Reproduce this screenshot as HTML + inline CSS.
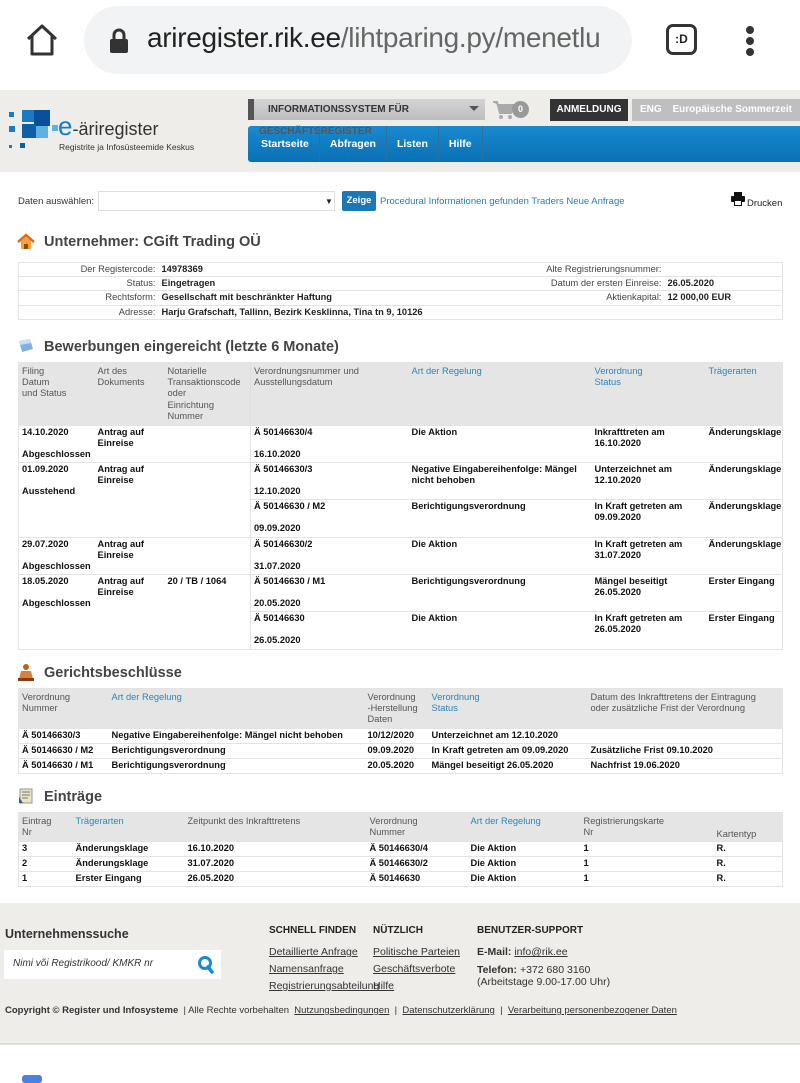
<!DOCTYPE html>
<html><head><meta charset="utf-8">
<style>
*{box-sizing:border-box;margin:0;padding:0}
body{width:800px;height:1080px;overflow:hidden;background:#fff;font-family:"Liberation Sans",Arial,sans-serif;color:#222;position:relative;font-size:10px}
.a{position:absolute}
.top{left:0;top:0;width:800px;height:90px;background:#fff}
.url{left:84px;top:6px;width:548px;height:68px;border-radius:34px;background:#f1f3f4}
.hdr{left:0;top:90px;width:800px;height:82px;background:#eeede9}
.panel{left:2px;top:172px;width:798px;height:731px;background:#fff}
.foot{left:0;top:903px;width:800px;height:142px;background:#eeede9;border-bottom:2px solid #ddd}
table{border-collapse:collapse;position:absolute;table-layout:fixed;font-size:9.3px}
td{vertical-align:top;padding:1px 3px;line-height:11.2px;overflow:hidden}
.h td{background:#e5e5e5;color:#555}
.h td.l{color:#2a86b5}
.b td{font-weight:bold;color:#111}
.grid td{border-top:1px solid #e3e3e3}
.title{font-size:14.5px;font-weight:bold;color:#444;left:44px}
a{color:#222}
.fl a{display:block;color:#333;text-decoration:underline;font-size:10.5px;margin-bottom:5px}
</style></head><body>
<div class="a top"></div>
<svg class="a" style="left:24px;top:22px" width="36" height="36" viewBox="0 0 36 36"><path d="M4 17 L18 4 L32 17 M8 14 V32 H28 V14" fill="none" stroke="#333" stroke-width="3" stroke-linejoin="round"/></svg>
<div class="a url"></div>
<svg class="a" style="left:108px;top:28px" width="22" height="26" viewBox="0 0 22 26"><rect x="2" y="11" width="18" height="14" rx="2" fill="#333"/><path d="M6 11 V7 a5 5 0 0 1 10 0 V11" fill="none" stroke="#333" stroke-width="3"/></svg>
<div class="a" style="left:147px;top:22px;font-size:28px;color:#222;letter-spacing:-0.3px">ariregister.rik.ee<span style="color:#666">/lihtparing.py/menetlu</span></div>
<div class="a" style="left:666px;top:24px;width:31px;height:31px;border:3px solid #333;border-radius:7px;font-size:12px;font-weight:bold;text-align:center;line-height:25px">:D</div>
<div class="a" style="left:746px;top:26px;width:8px;height:8px;border-radius:4px;background:#333"></div>
<div class="a" style="left:746px;top:37px;width:8px;height:8px;border-radius:4px;background:#333"></div>
<div class="a" style="left:746px;top:48px;width:8px;height:8px;border-radius:4px;background:#333"></div>

<div class="a hdr"></div>
<div class="a" style="left:9px;top:112px;width:5px;height:5px;background:#1a7cc0"></div>
<div class="a" style="left:22px;top:110px;width:12px;height:12px;background:#1a7cc0"></div>
<div class="a" style="left:34px;top:110px;width:16px;height:16px;background:#0a4f9a"></div>
<div class="a" style="left:9px;top:126px;width:6px;height:6px;background:#1a7cc0"></div>
<div class="a" style="left:22px;top:124px;width:14px;height:14px;background:#0d5fa8"></div>
<div class="a" style="left:36px;top:126px;width:12px;height:12px;background:#5fb0e3"></div>
<div class="a" style="left:52px;top:125px;width:6px;height:6px;background:#5fb0e3"></div>
<div class="a" style="left:9px;top:145px;width:3px;height:3px;background:#1a7cc0"></div>
<div class="a" style="left:20px;top:143px;width:5px;height:5px;background:#0d5fa8"></div>
<div class="a" style="left:58px;top:113px;font-size:26px;color:#1a7cc0;line-height:26px">e<span style="font-size:18px;color:#333">-äriregister</span></div>
<div class="a" style="left:59px;top:142px;font-size:8.5px;color:#333">Registrite ja Infosüsteemide Keskus</div>
<div class="a" style="left:248px;top:99px;width:237px;height:21px;background:linear-gradient(#d4d4d4,#bdbdbd);border-left:6px solid #555;font-size:10px;font-weight:bold;color:#333;padding:5px 14px">INFORMATIONSSYSTEM FÜR</div>
<div class="a" style="left:469px;top:106px;border:5px solid transparent;border-top:5px solid #555"></div>
<svg class="a" style="left:492px;top:100px" width="22" height="20" viewBox="0 0 22 20"><path d="M1 2 H5 L8 13 H19 L21 5 H6" fill="#aaa" stroke="#aaa" stroke-width="2"/><circle cx="9" cy="17" r="2" fill="#aaa"/><circle cx="18" cy="17" r="2" fill="#aaa"/></svg>
<div class="a" style="left:512px;top:101px;width:17px;height:17px;border-radius:9px;background:#999;color:#fff;font-size:9px;font-weight:bold;text-align:center;line-height:17px">0</div>
<div class="a" style="left:550px;top:99px;width:78px;height:22px;background:#333;color:#fff;font-size:10px;font-weight:bold;text-align:center;line-height:22px">ANMELDUNG</div>
<div class="a" style="left:632px;top:99px;width:168px;height:22px;background:#bfbfbf;color:#fff;font-size:10px;font-weight:bold;line-height:22px;padding-left:8px">ENG <span style="margin-left:8px">Europäische Sommerzeit</span></div>
<div class="a" style="left:248px;top:126px;width:552px;height:36px;background:linear-gradient(#1a8ad0,#0a70b4);border-radius:3px 0 0 3px"></div>
<div class="a" style="left:259px;top:126px;font-size:10px;font-weight:bold;color:#555">GESCHÄFTSREGISTER</div>
<div class="a" style="left:248px;top:126px;height:36px;font-size:10.5px;font-weight:bold;color:#fff;display:flex">
<div style="padding:12px 10px 0 13px;border-right:1px solid #2f6f9a">Startseite</div>
<div style="padding:12px 10px 0 10px;border-right:1px solid #2f6f9a">Abfragen</div>
<div style="padding:12px 10px 0 10px;border-right:1px solid #2f6f9a">Listen</div>
<div style="padding:12px 10px 0 10px;border-right:1px solid #2f6f9a">Hilfe</div>
</div>

<div class="a panel"></div>
<div class="a" style="left:18px;top:196px;font-size:9.5px;color:#333">Daten auswählen:</div>
<div class="a" style="left:98px;top:191px;width:237px;height:20px;border:1px solid #ddd;background:#fff"></div>
<div class="a" style="left:325px;top:197px;font-size:8px">▼</div>
<div class="a" style="left:342px;top:191px;width:34px;height:20px;background:#1a78b8;color:#fff;font-weight:bold;font-size:9.5px;text-align:center;line-height:20px;border-radius:2px">Zeige</div>
<div class="a" style="left:380px;top:196px;font-size:9.5px;color:#2a7db0">Procedural Informationen gefunden Traders Neue Anfrage</div>
<svg class="a" style="left:731px;top:192px" width="14" height="14" viewBox="0 0 14 14"><rect x="3" y="0" width="8" height="4" fill="#111"/><rect x="0" y="4" width="14" height="6" rx="1" fill="#111"/><rect x="3" y="8" width="8" height="6" fill="#111"/><rect x="4" y="9" width="6" height="4" fill="#fff"/></svg>
<div class="a" style="left:747px;top:198px;font-size:9.5px">Drucken</div>

<svg class="a" style="left:17px;top:233px" width="18" height="18" viewBox="0 0 18 18"><path d="M1 9 L9 2 L17 9" fill="none" stroke="#e06a1a" stroke-width="2.5"/><path d="M4 8 V16 H14 V8 L9 4Z" fill="#f3a33a"/><rect x="7" y="11" width="4" height="5" fill="#8a4a1a"/></svg>
<div class="a title" style="top:234px">Unternehmer: CGift Trading OÜ</div>
<table class="grid" style="left:18px;top:262px;width:765px;border:1px solid #e3e3e3">
<col style="width:140px"><col style="width:370px"><col style="width:136px"><col>
<tr><td style="text-align:right;color:#444">Der Registercode:</td><td style="font-weight:bold">14978369</td><td style="text-align:right;color:#444">Alte Registrierungsnummer:</td><td></td></tr>
<tr><td style="text-align:right;color:#444">Status:</td><td style="font-weight:bold">Eingetragen</td><td style="text-align:right;color:#444">Datum der ersten Einreise:</td><td style="font-weight:bold">26.05.2020</td></tr>
<tr><td style="text-align:right;color:#444">Rechtsform:</td><td style="font-weight:bold">Gesellschaft mit beschränkter Haftung</td><td style="text-align:right;color:#444">Aktienkapital:</td><td style="font-weight:bold">12 000,00 EUR</td></tr>
<tr><td style="text-align:right;color:#444">Adresse:</td><td colspan="3" style="font-weight:bold">Harju Grafschaft, Tallinn, Bezirk Kesklinna, Tina tn 9, 10126</td></tr>
</table>

<svg class="a" style="left:17px;top:337px" width="18" height="18" viewBox="0 0 18 18"><path d="M2 4 L13 2 L16 12 L5 15Z" fill="#7fb0e0"/><path d="M2 4 L13 2 L14 6 L3 8Z" fill="#c8e0f5"/></svg>
<div class="a title" style="top:339px">Bewerbungen eingereicht (letzte 6 Monate)</div>
<table class="grid" style="left:18px;top:362px;width:765px;border:1px solid #e3e3e3">
<col style="width:76px"><col style="width:70px"><col style="width:86px"><col style="width:158px"><col style="width:183px"><col style="width:114px"><col>
<tr class="h" style="height:63px"><td style="padding-top:3px">Filing<br>Datum<br>und Status</td><td style="padding-top:3px">Art des<br>Dokuments</td><td style="padding-top:3px">Notarielle<br>Transaktionscode<br>oder<br>Einrichtung<br>Nummer</td><td style="border-left:1px solid #ddd;padding-top:3px">Verordnungsnummer und<br>Ausstellungsdatum</td><td class="l" style="padding-top:3px">Art der Regelung</td><td class="l" style="padding-top:3px">Verordnung<br>Status</td><td class="l" style="padding-top:3px">Trägerarten</td></tr>
<tr class="b" style="height:37px"><td>14.10.2020<br><br>Abgeschlossen</td><td>Antrag auf<br>Einreise</td><td></td><td style="border-left:1px solid #e3e3e3">Ä 50146630/4<br><br>16.10.2020</td><td>Die Aktion</td><td>Inkrafttreten am<br>16.10.2020</td><td>Änderungsklage</td></tr>
<tr class="b" style="height:37px"><td rowspan="2">01.09.2020<br><br>Ausstehend</td><td rowspan="2">Antrag auf<br>Einreise</td><td rowspan="2"></td><td style="border-left:1px solid #e3e3e3">Ä 50146630/3<br><br>12.10.2020</td><td>Negative Eingabereihenfolge: Mängel nicht behoben</td><td>Unterzeichnet am<br>12.10.2020</td><td>Änderungsklage</td></tr>
<tr class="b" style="height:38px"><td style="border-left:1px solid #e3e3e3">Ä 50146630 / M2<br><br>09.09.2020</td><td>Berichtigungsverordnung</td><td>In Kraft getreten am<br>09.09.2020</td><td>Änderungsklage</td></tr>
<tr class="b" style="height:36px"><td>29.07.2020<br><br>Abgeschlossen</td><td>Antrag auf<br>Einreise</td><td></td><td style="border-left:1px solid #e3e3e3">Ä 50146630/2<br><br>31.07.2020</td><td>Die Aktion</td><td>In Kraft getreten am<br>31.07.2020</td><td>Änderungsklage</td></tr>
<tr class="b" style="height:37px"><td rowspan="2">18.05.2020<br><br>Abgeschlossen</td><td rowspan="2">Antrag auf<br>Einreise</td><td rowspan="2">20 / TB / 1064</td><td style="border-left:1px solid #e3e3e3">Ä 50146630 / M1<br><br>20.05.2020</td><td>Berichtigungsverordnung</td><td>Mängel beseitigt<br>26.05.2020</td><td>Erster Eingang</td></tr>
<tr class="b" style="height:38px"><td style="border-left:1px solid #e3e3e3">Ä 50146630<br><br>26.05.2020</td><td>Die Aktion</td><td>In Kraft getreten am<br>26.05.2020</td><td>Erster Eingang</td></tr>
</table>

<svg class="a" style="left:17px;top:663px" width="18" height="18" viewBox="0 0 18 18"><circle cx="9" cy="4" r="3" fill="#c0601a"/><path d="M4 8 L14 8 L16 16 L2 16Z" fill="#d88040"/><rect x="1" y="15" width="16" height="3" fill="#8a3a10"/></svg>
<div class="a title" style="top:665px">Gerichtsbeschlüsse</div>
<table class="grid" style="left:18px;top:688px;width:765px;border:1px solid #e3e3e3">
<col style="width:90px"><col style="width:256px"><col style="width:64px"><col style="width:159px"><col>
<tr class="h" style="height:40px"><td style="padding-top:3px">Verordnung<br>Nummer</td><td class="l" style="padding-top:3px">Art der Regelung</td><td style="padding-top:3px">Verordnung<br>-Herstellung<br>Daten</td><td class="l" style="padding-top:3px">Verordnung<br>Status</td><td style="padding-top:3px">Datum des Inkrafttretens der Eintragung<br>oder zusätzliche Frist der Verordnung</td></tr>
<tr class="b" style="height:15px"><td>Ä 50146630/3</td><td>Negative Eingabereihenfolge: Mängel nicht behoben</td><td>10/12/2020</td><td>Unterzeichnet am 12.10.2020</td><td></td></tr>
<tr class="b" style="height:15px"><td>Ä 50146630 / M2</td><td>Berichtigungsverordnung</td><td>09.09.2020</td><td>In Kraft getreten am 09.09.2020</td><td>Zusätzliche Frist 09.10.2020</td></tr>
<tr class="b" style="height:15px"><td>Ä 50146630 / M1</td><td>Berichtigungsverordnung</td><td>20.05.2020</td><td>Mängel beseitigt 26.05.2020</td><td>Nachfrist 19.06.2020</td></tr>
</table>

<svg class="a" style="left:17px;top:787px" width="18" height="18" viewBox="0 0 18 18"><path d="M3 2 H15 V16 H3Z" fill="#e8e4c8" stroke="#998" stroke-width="1"/><path d="M5 5 H13 M5 8 H13 M5 11 H11" stroke="#777"/><path d="M2 10 L6 16 H2Z" fill="#3a5a8a"/></svg>
<div class="a title" style="top:789px">Einträge</div>
<table class="grid" style="left:18px;top:812px;width:765px;border:1px solid #e3e3e3">
<col style="width:54px"><col style="width:112px"><col style="width:182px"><col style="width:101px"><col style="width:113px"><col style="width:133px"><col>
<tr class="h" style="height:29px"><td style="padding-top:3px">Eintrag<br>Nr</td><td class="l" style="padding-top:3px">Trägerarten</td><td style="padding-top:3px">Zeitpunkt des Inkrafttretens</td><td style="padding-top:3px">Verordnung<br>Nummer</td><td class="l" style="padding-top:3px">Art der Regelung</td><td style="padding-top:3px">Registrierungskarte<br>Nr</td><td style="vertical-align:bottom">Kartentyp</td></tr>
<tr class="b" style="height:15px"><td>3</td><td>Änderungsklage</td><td>16.10.2020</td><td>Ä 50146630/4</td><td>Die Aktion</td><td>1</td><td>R.</td></tr>
<tr class="b" style="height:15px"><td>2</td><td>Änderungsklage</td><td>31.07.2020</td><td>Ä 50146630/2</td><td>Die Aktion</td><td>1</td><td>R.</td></tr>
<tr class="b" style="height:15px"><td>1</td><td>Erster Eingang</td><td>26.05.2020</td><td>Ä 50146630</td><td>Die Aktion</td><td>1</td><td>R.</td></tr>
</table>

<div class="a foot"></div>
<div class="a" style="left:5px;top:927px;font-size:12.5px;font-weight:bold;color:#333">Unternehmenssuche</div>
<div class="a" style="left:4px;top:950px;width:217px;height:29px;background:#fff;font-size:10px;font-style:italic;color:#333;padding:8px 9px">Nimi või Registrikood/ KMKR nr</div>
<svg class="a" style="left:197px;top:955px" width="18" height="20" viewBox="0 0 18 20"><circle cx="8" cy="8" r="5.5" fill="none" stroke="#1a8ad0" stroke-width="3"/><path d="M11 12 L15 17" stroke="#1a8ad0" stroke-width="3.5" stroke-linecap="round"/></svg>
<div class="a" style="left:269px;top:925px;font-size:10px;font-weight:bold;color:#222">SCHNELL FINDEN</div>
<div class="a" style="left:373px;top:925px;font-size:10px;font-weight:bold;color:#222">NÜTZLICH</div>
<div class="a" style="left:477px;top:925px;font-size:10px;font-weight:bold;color:#222">BENUTZER-SUPPORT</div>
<div class="a fl" style="left:269px;top:946px"><a>Detaillierte Anfrage</a><a>Namensanfrage</a><a>Registrierungsabteilung</a></div>
<div class="a fl" style="left:373px;top:946px"><a>Politische Parteien</a><a>Geschäftsverbote</a><a>Hilfe</a></div>
<div class="a" style="left:477px;top:946px;font-size:10.5px;color:#333;line-height:12.5px"><b>E-Mail:</b> <u>info@rik.ee</u><div style="margin-top:5px"><b>Telefon:</b> +372 680 3160<br>(Arbeitstage 9.00-17.00 Uhr)</div></div>
<div class="a" style="left:5px;top:1005px;font-size:9.5px;color:#333;white-space:nowrap"><b>Copyright © Register und Infosysteme</b> &nbsp;| Alle Rechte vorbehalten &nbsp;<u>Nutzungsbedingungen</u> &nbsp;| &nbsp;<u>Datenschutzerklärung</u> &nbsp;| &nbsp;<u>Verarbeitung personenbezogener Daten </u></div>
<div class="a" style="left:22px;top:1075px;width:20px;height:8px;border-radius:3px;background:#4a80e0"></div>
</body></html>
